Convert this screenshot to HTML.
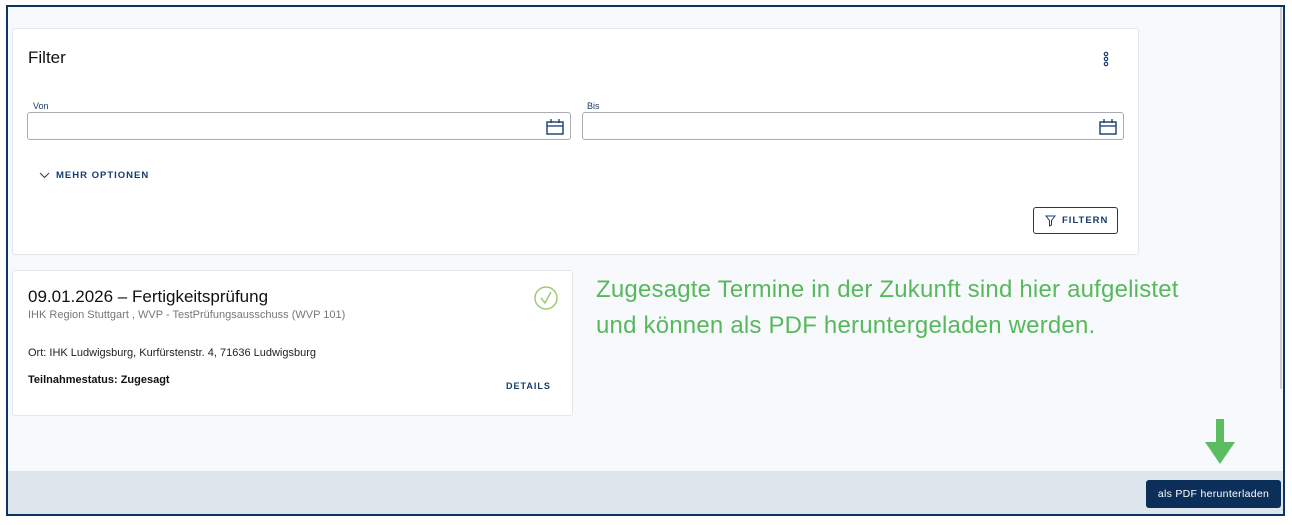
<!DOCTYPE html>
<html><head><meta charset="utf-8"><style>
*{box-sizing:border-box;margin:0;padding:0}
body{width:1292px;height:525px;background:#fff;font-family:"Liberation Sans",sans-serif;position:relative;overflow:hidden}
.frame{position:absolute;left:6px;top:5px;width:1279px;height:511px;border:2px solid #0d3364;background:#f7f9fd;overflow:hidden}
.card{position:absolute;background:#fff;border:1px solid #e3e7ec;border-radius:3px}
.input{position:absolute;height:28px;border:1px solid #a9adb3;border-radius:3px;background:#fff}
.lbl{position:absolute;font-size:9px;color:#1b3a66}
.btxt{font-weight:bold;font-size:9.5px;letter-spacing:1px;color:#173c6b}
</style></head><body>
<div class="frame">
  <div class="card" style="left:4px;top:21px;width:1127px;height:227px">
    <div style="position:absolute;left:15px;top:19px;font-size:17px;color:#111">Filter</div>
    <svg style="position:absolute;left:1090px;top:22px" width="6" height="16"><circle cx="3" cy="3" r="1.7" fill="none" stroke="#173c6b" stroke-width="1.2"/><circle cx="3" cy="8" r="1.7" fill="none" stroke="#173c6b" stroke-width="1.2"/><circle cx="3" cy="13" r="1.7" fill="none" stroke="#173c6b" stroke-width="1.2"/></svg>
    <div class="lbl" style="left:20px;top:72px">Von</div>
    <div class="input" style="left:14px;top:83px;width:544px">
      <svg style="position:absolute;right:6px;top:5px" width="18" height="17" viewBox="0 0 18 17"><rect x="1" y="4" width="16" height="12" fill="none" stroke="#173c6b" stroke-width="1.4"/><line x1="1" y1="8" x2="17" y2="8" stroke="#173c6b" stroke-width="1.3"/><line x1="5" y1="1" x2="5" y2="5" stroke="#173c6b" stroke-width="1.3"/><line x1="13" y1="1" x2="13" y2="5" stroke="#173c6b" stroke-width="1.3"/></svg>
    </div>
    <div class="lbl" style="left:574px;top:72px">Bis</div>
    <div class="input" style="left:569px;top:83px;width:542px">
      <svg style="position:absolute;right:6px;top:5px" width="18" height="17" viewBox="0 0 18 17"><rect x="1" y="4" width="16" height="12" fill="none" stroke="#173c6b" stroke-width="1.4"/><line x1="1" y1="8" x2="17" y2="8" stroke="#173c6b" stroke-width="1.3"/><line x1="5" y1="1" x2="5" y2="5" stroke="#173c6b" stroke-width="1.3"/><line x1="13" y1="1" x2="13" y2="5" stroke="#173c6b" stroke-width="1.3"/></svg>
    </div>
    <svg style="position:absolute;left:26px;top:143px" width="11" height="7"><polyline points="1,1 5.5,5.5 10,1" fill="none" stroke="#173c6b" stroke-width="1"/></svg>
    <div class="btxt" style="position:absolute;left:43px;top:141px">MEHR OPTIONEN</div>
    <div style="position:absolute;left:1020px;top:178px;width:85px;height:27px;border:1px solid #173c6b;border-radius:3px">
      <svg style="position:absolute;left:11px;top:7px" width="11" height="12"><path d="M1 1 H10 L6.5 5.5 V10 L4.5 11 V5.5 Z" fill="none" stroke="#173c6b" stroke-width="1"/></svg>
      <div class="btxt" style="position:absolute;left:28px;top:7px">FILTERN</div>
    </div>
  </div>
  <div class="card" style="left:4px;top:263px;width:561px;height:146px">
    <div style="position:absolute;left:15px;top:16px;font-size:17px;color:#111">09.01.2026 – Fertigkeitsprüfung</div>
    <div style="position:absolute;left:15px;top:38px;font-size:11px;color:#777">IHK Region Stuttgart , WVP - TestPrüfungsausschuss (WVP 101)</div>
    <div style="position:absolute;left:15px;top:76px;font-size:11px;color:#222">Ort: IHK Ludwigsburg, Kurfürstenstr. 4, 71636 Ludwigsburg</div>
    <div style="position:absolute;left:15px;top:103px;font-size:11px;font-weight:bold;color:#111">Teilnahmestatus: Zugesagt</div>
    <div class="btxt" style="position:absolute;left:493px;top:110px;font-size:9px">DETAILS</div>
    <svg style="position:absolute;left:520px;top:14px" width="26" height="26"><circle cx="13" cy="13" r="11" fill="none" stroke="#9bcd6f" stroke-width="1.5"/><polyline points="8,13 12,18 18,7" fill="none" stroke="#9bcd6f" stroke-width="1.5"/></svg>
  </div>
  <div style="position:absolute;left:588px;top:265px;font-size:24px;line-height:36px;color:#58b85c;letter-spacing:.2px">Zugesagte Termine in der Zukunft sind hier aufgelistet<br>und können als PDF heruntergeladen werden.</div>
  <div style="position:absolute;left:0;top:464px;width:1279px;height:47px;background:#dfe5ec"></div>
  <div style="position:absolute;left:1272px;top:0;width:2px;height:382px;background:#ccc"></div>
  <svg style="position:absolute;left:1195px;top:412px" width="34" height="46"><path d="M13 0 H21 V23 H32 L17 45 L2 23 H13 Z" fill="#5cbc60"/></svg>
  <div style="position:absolute;left:1138px;top:473px;width:135px;height:28px;background:#0c2f5a;border-radius:3px;color:#fff;font-size:10.5px;text-align:center;line-height:28px;letter-spacing:.3px">als PDF herunterladen</div>
</div>
</body></html>
